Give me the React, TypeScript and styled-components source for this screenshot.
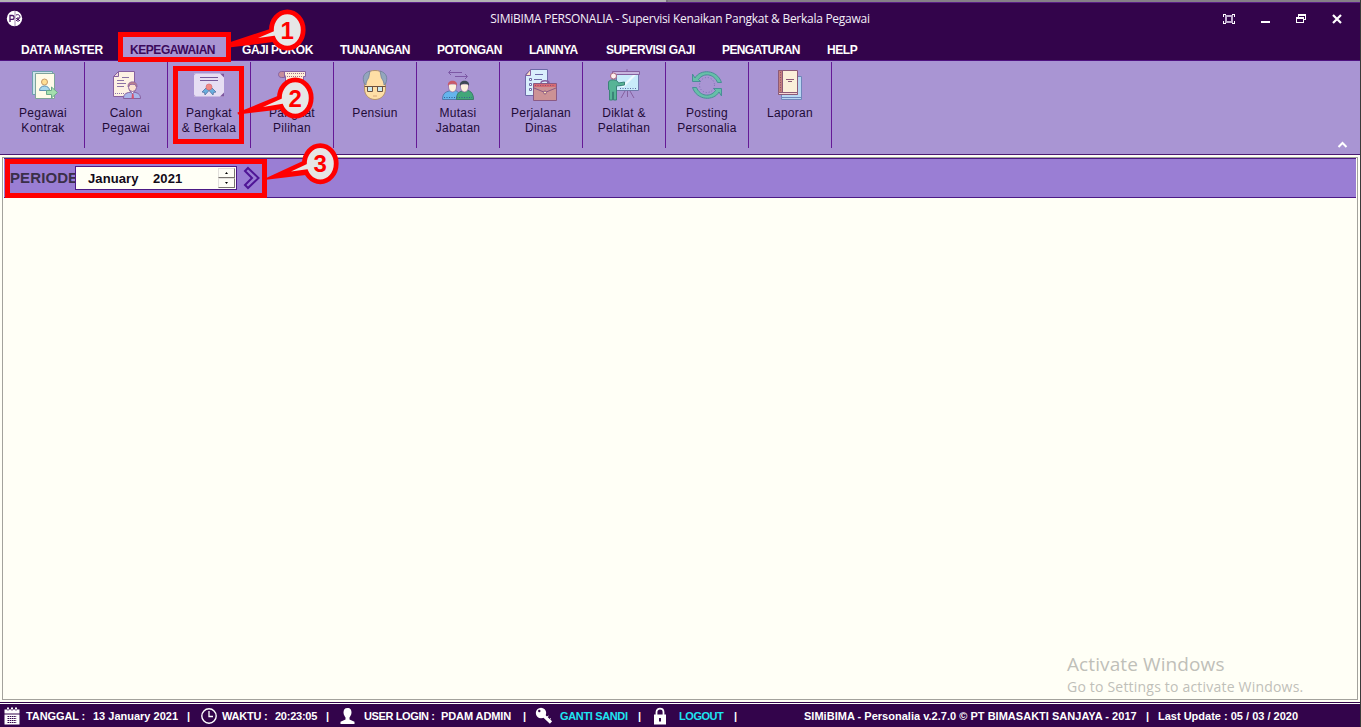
import React from "react";
import styled, { createGlobalStyle } from "styled-components";

const GlobalStyle = createGlobalStyle`
  * { box-sizing: border-box; }
  body { margin: 0; overflow: hidden; background: #33044b; }
`;

const sans = `"Liberation Sans", Arial, sans-serif`;
const ui = `"Open Sans", "Noto Sans", sans-serif`;

const Window = styled.div`
  position: relative;
  display: flex;
  flex-direction: column;
  width: 1361px;
  height: 727px;
  overflow: hidden;
  font-family: ${sans};
  background: #fffff6;
  border-right: 1px solid #3a3a3a;
`;

const DesktopEdge = styled.div`
  display: flex;
  flex: 0 0 2px;
  background: #858087;
`;
const DesktopEdgeLight = styled.div`
  width: 668px;
  background: #b3b3b3;
  border-right: 2px solid #77727a;
`;

const Header = styled.header`
  flex: 0 0 59px;
  display: flex;
  flex-direction: column;
  background: #33044b;
  border-top: 1px solid #5a1f86;
  border-bottom: 1px solid #4f1180;
`;

const TitleBar = styled.div`
  flex: 0 0 32px;
  display: grid;
  grid-template-columns: 1fr auto 1fr;
  align-items: center;
  padding: 0 6px 1px;
`;
const TitleText = styled.h1`
  margin: 0;
  font: 400 12px/16px ${ui};
  letter-spacing: -0.27px;
  color: #f4eef8;
  white-space: nowrap;
`;
const Controls = styled.div`
  display: flex;
  justify-content: flex-end;
  gap: 20px;
  padding-right: 9px;
`;

const MenuBar = styled.nav`
  display: flex;
  flex: 1;
  padding-left: 9px;
`;
const MenuItem = styled.div<{ $w: number; $active?: boolean; $ls?: number }>`
  width: ${(p) => p.$w}px;
  padding: 5px 0 0 12px;
  font-size: 12px;
  font-weight: 700;
  line-height: 20px;
  letter-spacing: ${(p) => p.$ls ?? -0.45}px;
  white-space: nowrap;
  color: ${(p) => (p.$active ? "#3c0a5c" : "#fff")};
  background: ${(p) => (p.$active ? "#a995d3" : "transparent")};
`;

const Ribbon = styled.div`
  flex: 0 0 94px;
  display: flex;
  align-items: flex-start;
  padding: 1px 12px 0 2px;
  background: #a995d3;
  border-bottom: 1px solid #4b1a72;
`;
const RibbonItem = styled.div`
  width: 83px;
  height: 86px;
  padding-top: 7px;
  display: flex;
  flex-direction: column;
  align-items: center;
  border-right: 1px solid #651a96;
`;
const RibbonLabel = styled.span`
  margin-top: 5px;
  font-size: 12px;
  line-height: 15px;
  letter-spacing: 0.27px;
  text-align: center;
  white-space: pre;
  color: #1f0b38;
`;
const Collapse = styled.div`
  margin-left: auto;
  align-self: flex-end;
  height: 19px;
`;

const Panel = styled.main`
  flex: 1;
  margin: 2px 2px 2px 2px;
  border: 1px solid #a3a29c;
  padding: 0 0 0 1px;
  background: #fffff6;
`;
const FilterBar = styled.div`
  display: flex;
  align-items: flex-start;
  width: 1352px;
  height: 40px;
  padding: 7px 0 0 6px;
  background: #9a7ed4;
  border-top: 1px solid #4c1a85;
  border-bottom: 1px solid #4c1a85;
`;
const PeriodLabel = styled.label`
  width: 65px;
  padding-right: 1px;
  overflow: hidden;
  font-size: 15px;
  font-weight: 700;
  line-height: 23px;
  letter-spacing: 0.1px;
  color: #3a2f49;
`;
const DateField = styled.div`
  display: flex;
  width: 162px;
  height: 24px;
  padding: 1px 1px 1px 12px;
  background: #fffff6;
  border: 1px solid #4c1a85;
  font-size: 13px;
  font-weight: 700;
  line-height: 22px;
  letter-spacing: 0.1px;
  color: #120a18;
`;
const Month = styled.span`
  width: 65px;
`;
const Spinner = styled.div`
  margin-left: auto;
  width: 17px;
  display: flex;
  flex-direction: column;
`;
const SpinButton = styled.div`
  display: flex;
  align-items: center;
  justify-content: center;
  flex: 1;
  background: #fdfdf6;
  border: 1px solid #e2e0dc;
  border-right-color: #77736f;
  border-bottom-color: #77736f;
`;
const GoIcon = styled.svg`
  margin: 0 0 0 6px;
`;

const StatusBar = styled.footer`
  flex: 0 0 25px;
  display: flex;
  align-items: center;
  border-top: 1px solid #33044b;
  background: #33044b;
  box-shadow: inset 0 1px 0 #fff;
  padding-top: 1px;
`;
const Cell = styled.span<{ $w: number; $ls?: number; $link?: boolean }>`
  flex: 0 0 auto;
  width: ${(p) => p.$w}px;
  font-size: 11px;
  font-weight: 700;
  line-height: 16px;
  letter-spacing: ${(p) => p.$ls ?? 0}px;
  white-space: nowrap;
  color: ${(p) => (p.$link ? "#1ee6f2" : "#fff")};
`;
const IconCell = styled.span<{ $w: number }>`
  flex: 0 0 auto;
  width: ${(p) => p.$w}px;
  height: 18px;
`;

const Watermark = styled.div`
  position: absolute;
  left: 1067px;
  top: 652px;
  font-family: ${ui};
  color: #bfc0b9;
  white-space: nowrap;
`;
const WatermarkTitle = styled.div`
  font-size: 19px;
  line-height: 24px;
  letter-spacing: 0.1px;
`;
const WatermarkText = styled.div`
  font-size: 14px;
  line-height: 22px;
  letter-spacing: 0.2px;
`;

const Highlight = styled.div<{ $x: number; $y: number; $w: number; $h: number }>`
  position: absolute;
  left: ${(p) => p.$x}px;
  top: ${(p) => p.$y}px;
  width: ${(p) => p.$w}px;
  height: ${(p) => p.$h}px;
  border: 5px solid #f00;
`;
const Annotations = styled.svg`
  position: absolute;
  left: 0;
  top: 0;
  pointer-events: none;
`;

const ln = "#86609f";

const icons: Record<string, React.ReactNode> = {
  kontrak: (
    <g strokeWidth="1">
      <path d="M5.500 2.500h20v23h-20z" fill="#cfe6ea" stroke="#6f9fb0" />
      <path d="M8.500 4.500h19v25h-19z" fill="#fffbe8" stroke="#7fa39b" />
      <circle cx="17.500" cy="13" r="3" fill="#ffdf94" stroke="#c49a6a" />
      <path d="M12.500 21.500c0-6 10-6 10 0z" fill="#a8d8ee" stroke="#5d8fb4" />
      <path d="M19.500 21.500h5v-3.500l6 5.500-6 5.500v-3.500h-5z" fill="#a5dfae" stroke="#6aa98a" />
    </g>
  ),
  calon: (
    <g strokeWidth="1">
      <path d="M8.500 2.500h16v25h-21v-20z" fill="#fdf1e4" stroke={ln} />
      <path d="M3.500 7.500h5v-5z" fill="#efd9dc" stroke={ln} />
      <path d="M7 11.500h7M7 14.500h9M7 17.500h7M12 8.500h7" stroke="#8b73a5" fill="none" />
      <path d="M5 24.500h10" stroke="#8b73a5" strokeDasharray="1 1" />
      <path d="M13.500 29.500c0-5 3-6 9-6.500 5 .5 8 2 8 6.500z" fill="#a9b5ea" stroke={ln} />
      <path d="M20 22l2.500 3 2.500-3v-3h-5z" fill="#fff" stroke={ln} />
      <path d="M22 25h1.500l.5 4.500h-2.500z" fill="#d9506c" />
      <circle cx="22.500" cy="18.500" r="4" fill="#fbe1cf" stroke={ln} />
      <path d="M18 18c-1-7 10-7 9 0l-2-2.500h-5z" fill="#b98090" stroke={ln} strokeWidth=".6" />
    </g>
  ),
  pangkat: (
    <g>
      <path d="M1 4.500h30v23H1z" fill="#e6def3" />
      <path d="M31 4.500h-4l4 4zM31 27.500h-4l4-4z" fill="#7d569f" />
      <path d="M1 4.500h2l-2 2zM1 27.500h2l-2-2z" fill="#b9a2d3" />
      <path d="M7 8.500h18M7 11.500h18" stroke="#75599a" />
      <path d="M13 19l-4 4 2.500.5.5 2.500 4-4.500zM19 19l4 4-2.500.5-.5 2.500-4-4.500z" fill="#68aede" stroke="#52719f" strokeWidth=".8" />
      <circle cx="16" cy="18" r="3" fill="#f08a84" stroke="#d76c76" strokeWidth=".7" />
    </g>
  ),
  pilihan: (
    <g strokeWidth="1">
      <path d="M6.500 2.500h23v5h-2v22h-18v-22z" fill="#fdeed9" stroke={ln} />
      <path d="M8.500 8.500h-3c-4 0-4-6 0-6h3z" fill="#c58c9b" stroke={ln} />
      <path d="M11 4.500h17M11 7.500h16" stroke="#a76d8b" strokeDasharray="1 1" />
      <path d="M12 13.500h11M12 17.500h11" stroke={ln} />
    </g>
  ),
  pensiun: (
    <g strokeWidth="1">
      <path d="M5.500 13C5 5 9 1.500 16 1.500S27 5 26.500 13v7c0 6-4.500 10.500-10.500 10.500S5.500 26 5.500 20z" fill="#ffdfa6" stroke="#b3936f" />
      <path d="M11 2C4 4 3 9 5.500 15l1.500 1c0-5 3-6 3-9zM21 2c7 2 8 7 5.500 13L25 16c0-5-3-6-3-9z" fill="#93a6bd" stroke="#6f7f9c" strokeWidth=".8" />
      <path d="M8.500 17.500h5v5h-5zM18.500 17.500h5v5h-5z" fill="#c9e8ee" stroke="#6a5142" />
      <path d="M5.500 17.500h21" stroke="#6a5142" />
      <path d="M14 27h4" stroke="#d9a878" />
    </g>
  ),
  mutasi: (
    <g strokeWidth="1">
      <path d="M20 3.500H7M9 1L6.500 3.500 9 6M13 7.500h12M23 5l2.500 2.500L23 10" stroke="#7c58a5" fill="none" />
      <path d="M.5 30.500c0-7 4-8 9-9s9 2 9 9z" fill="#65b4ec" stroke="#5878ac" />
      <path d="M14.500 30.500c0-7 3-8 8-9s9 2 9 9z" fill="#42a779" stroke="#3c7b69" />
      <path d="M2 28.500h28" stroke="#345f94" strokeDasharray="1 1.500" />
      <path d="M6.500 15h8v3c0 3-2 5-4 5s-4-2-4-5z" fill="#fdf0dd" stroke={ln} strokeWidth=".7" />
      <path d="M6 17c-1.500-7 10.500-7 9 0-1-3-7.500-3-9 0z" fill="#c95a6a" />
      <path d="M18.500 15h8v3c0 3-2 5-4 5s-4-2-4-5z" fill="#fdf0dd" stroke={ln} strokeWidth=".7" />
      <path d="M18 17c-1.500-7 10.500-7 9 0-1-3-7.500-3-9 0z" fill="#3d4754" />
    </g>
  ),
  perjalanan: (
    <g strokeWidth="1">
      <path d="M5.500.5h17v26h-22v-21z" fill="#d9effc" stroke="#6d6aa8" />
      <path d="M.5 6.500h5v-6z" fill="#ffe2c4" stroke={ln} />
      <path d="M4.500 9.500h2v2h-2zM4.500 14.500h2v2h-2zM4.500 19.500h2v2h-2z" fill="#fff" stroke="#6d6aa8" />
      <path d="M9 10.500h8M9 15.500h3M10 5.500h8" stroke="#6d6aa8" />
      <path d="M16 14c0-3 8-3 8 0" fill="none" stroke={ln} strokeWidth="1.500" />
      <path d="M8.500 14.500h23v17h-23z" fill="#cc9295" stroke="#8a5a85" />
      <path d="M9 15h22v3H9z" fill="#d56a73" />
      <path d="M10 16.500h20" stroke="#8a4f74" strokeDasharray="1 1.500" />
      <path d="M9 19l11 4.500L31 19" fill="none" stroke="#8a5a85" />
      <circle cx="20" cy="23.500" r="1.500" fill="#ffe0b0" stroke="#8a5a85" />
    </g>
  ),
  diklat: (
    <g strokeWidth="1">
      <path d="M17 22l-4 7M22 22l4 7M19.500 22v6" stroke={ln} fill="none" />
      <path d="M8.500 5.500h22v16h-22z" fill="#c9ebfa" stroke="#6f78ab" />
      <path d="M13 18L25 6h3L16 18z" fill="#effaff" />
      <path d="M12 19.500h17" stroke="#5c6aa5" strokeDasharray="1 1.500" />
      <path d="M4.500 2.500h27v3h-27zM18 1h2" fill="#c8b6de" stroke={ln} />
      <path d="M.5 13c1-3 9-3 10 1l6-1v3l-8 1v14h-3v-8h-1v8h-3V21l-1-.5z" fill="#57b496" stroke="#3b8378" />
      <circle cx="5.500" cy="7" r="3" fill="#fff0ee" stroke="#a96880" />
    </g>
  ),
  posting: (
    <g strokeWidth="1">
      <path d="M4 9C9 0 26 0 30.500 13.500h-4C23 5 13 3 7.500 10.500L9.500 12.500h-8V5z" fill="#66bfa8" stroke="#4a8f96" />
      <path d="M28 23C23 32 6 32 1.500 18.500h4C9 27 19 29 24.500 21.500l-2-2h8V27z" fill="#66bfa8" stroke="#4a8f96" />
      <circle cx="16" cy="16" r="7.500" fill="none" stroke="#7d6bb2" strokeDasharray="1 2" />
    </g>
  ),
  laporan: (
    <g strokeWidth="1">
      <path d="M7.500 7.500h20v23h-20z" fill="#b9d8f3" stroke="#6f86b9" />
      <path d="M7.500 28.500h20" stroke="#6f86b9" />
      <path d="M4.500 1.500h19v24h-19z" fill="#fbefd9" stroke="#8c5a77" />
      <path d="M4.500 1.500h4v22h-4z" fill="#c47f7d" stroke="#8c5a77" />
      <path d="M6.500 3v20" stroke="#8c4f6a" strokeDasharray="1 1.500" />
      <path d="M4.500 23.500h19v2h-19z" fill="#f5d6d3" stroke="#8c5a77" />
      <path d="M12 10.500h8M14 12.500h4" stroke="#8c5a77" />
    </g>
  ),
};

const ribbonItems = [
  ["kontrak", "Pegawai\nKontrak"],
  ["calon", "Calon\nPegawai"],
  ["pangkat", "Pangkat\n& Berkala"],
  ["pilihan", "Pangkat\nPilihan"],
  ["pensiun", "Pensiun"],
  ["mutasi", "Mutasi\nJabatan"],
  ["perjalanan", "Perjalanan\nDinas"],
  ["diklat", "Diklat &\nPelatihan"],
  ["posting", "Posting\nPersonalia"],
  ["laporan", "Laporan"],
];

const menu: { label: string; w: number; active?: boolean; ls?: number }[] = [
  { label: "DATA MASTER", w: 109, ls: -0.3 },
  { label: "KEPEGAWAIAN", w: 112, active: true },
  { label: "GAJI POKOK", w: 98 },
  { label: "TUNJANGAN", w: 97, ls: -0.6 },
  { label: "POTONGAN", w: 92, ls: -0.53 },
  { label: "LAINNYA", w: 77, ls: -0.5 },
  { label: "SUPERVISI GAJI", w: 116 },
  { label: "PENGATURAN", w: 105, ls: -0.6 },
  { label: "HELP", w: 58 },
];

const Logo = () => (
  <svg width="17" height="17" viewBox="0 0 17 17">
    <circle cx="8.500" cy="8.500" r="7.700" fill="#fff" />
    <path d="M4 12V5.500h2.200a1.700 1.700 0 0 1 0 3.800H4" fill="none" stroke="#4a1666" strokeWidth="1.300" />
    <path d="M9 1v15" stroke="#8b6a9d" strokeWidth=".8" />
    <path d="M10 5c2-1 4 0 4 2s-2 2-4 1.500M12 7v5M10 11l2-2 2 2" fill="none" stroke="#4a1666" strokeWidth="1" />
  </svg>
);

const Callout = ({ x, y, n, tail, shine }: { x: number; y: number; n: number; tail: string; shine: string }) => (
  <g>
    <polygon points={tail} fill="#f00" />
    <ellipse cx={x} cy={y} rx="15.900" ry="18.100" fill="#e6e6e6" stroke="#f00" strokeWidth="4.800" />
    <polygon points={shine} fill="#e6e6e6" />
    <text x={x} y={y + 8.500} textAnchor="middle" fontFamily={sans} fontWeight="700" fontSize="24" fill="#f00">
      {n}
    </text>
  </g>
);

export default function App() {
  return (
    <Window>
      <GlobalStyle />
      <DesktopEdge>
        <DesktopEdgeLight />
      </DesktopEdge>
      <Header>
        <TitleBar>
          <Logo />
          <TitleText>SIMiBIMA PERSONALIA - Supervisi Kenaikan Pangkat &amp; Berkala Pegawai</TitleText>
          <Controls>
            <svg width="16" height="12" viewBox="0 0 16 12" fill="none" shapeRendering="crispEdges">
              <path d="M2.500 4V1.500H5M11 1.500h2.500V4M13.500 8v2.500H11M5 10.500H2.500V8" stroke="#fff" />
              <path d="M5 3h6v6H5z" fill="#33044b" stroke="#c3b0d0" strokeWidth="1.500" />
            </svg>
            <svg width="16" height="12" viewBox="0 0 16 12">
              <path d="M4 8h9v2H4z" fill="#fff" />
            </svg>
            <svg width="16" height="12" viewBox="0 0 16 12" fill="none" stroke="#fff" shapeRendering="crispEdges">
              <path d="M5.500 4V1.500h7v5H11M5 2.500h8" />
              <path d="M3.500 4.500h7v5h-7zM3 5.500h8" />
            </svg>
            <svg width="16" height="12" viewBox="0 0 16 12">
              <path d="M4 2l8 8M12 2l-8 8" stroke="#fff" strokeWidth="2.200" />
            </svg>
          </Controls>
        </TitleBar>
        <MenuBar>
          {menu.map((m) => (
            <MenuItem key={m.label} $w={m.w} $active={m.active} $ls={m.ls}>
              {m.label}
            </MenuItem>
          ))}
        </MenuBar>
      </Header>
      <Ribbon>
        {ribbonItems.map(([id, label]) => (
          <RibbonItem key={id}>
            <svg width="32" height="32" viewBox="0 0 32 32">
              {icons[id]}
            </svg>
            <RibbonLabel>{label}</RibbonLabel>
          </RibbonItem>
        ))}
        <Collapse>
          <svg width="11" height="8" viewBox="0 0 11 8">
            <path d="M1.500 6l4-4 4 4" fill="none" stroke="#fff" strokeWidth="2" />
          </svg>
        </Collapse>
      </Ribbon>
      <Panel>
        <FilterBar>
          <PeriodLabel>PERIODE</PeriodLabel>
          <DateField>
            <Month>January</Month>
            <span>2021</span>
            <Spinner>
              <SpinButton>
                <svg width="3" height="2"><path d="M0 2l1.500-2L3 2z" /></svg>
              </SpinButton>
              <SpinButton>
                <svg width="3" height="2"><path d="M0 0l1.500 2L3 0z" /></svg>
              </SpinButton>
            </Spinner>
          </DateField>
          <GoIcon width="18" height="24" viewBox="0 0 18 24" fill="none" stroke="#4f1596" strokeWidth="2">
            <path d="M5 2l10.500 10L5 22l-3-3 7-7-7-7z" />
          </GoIcon>
        </FilterBar>
      </Panel>
      <StatusBar>
        <IconCell $w={26}>
          <svg width="22" height="18" viewBox="0 0 22 18">
            <path d="M4.500 2.500h15v4h-15zM4.500 7.500h15v10h-15z" fill="#fff" />
            <path d="M8 .5v3.500M12 .5v3.500M16 .5v3.500" stroke="#fff" strokeWidth="2" />
            <path d="M8 2v2M12 2v2M16 2v2M7.500 9.500h9M7.500 11.500h9M7.500 13.500h9M7.500 15.500h9" stroke="#33044b" strokeWidth="1" strokeDasharray="1.600 .6" />
          </svg>
        </IconCell>
        <Cell $w={67} $ls={-0.1}>TANGGAL :</Cell>
        <Cell $w={94}>13 January 2021</Cell>
        <Cell $w={13}>|</Cell>
        <IconCell $w={22}>
          <svg width="18" height="18" viewBox="0 0 18 18" fill="none" stroke="#fff">
            <circle cx="9" cy="9" r="7.200" strokeWidth="1.400" />
            <path d="M9 4v5.500h4" strokeWidth="1.300" />
          </svg>
        </IconCell>
        <Cell $w={53} $ls={-0.25}>WAKTU :</Cell>
        <Cell $w={51} $ls={-0.25}>20:23:05</Cell>
        <Cell $w={13}>|</Cell>
        <IconCell $w={25}>
          <svg width="17" height="18" viewBox="0 0 17 18">
            <path d="M8.500 1c3 0 4 2 4 4.500S11 9.500 10.500 10.500v2l5 2.200V17h-14v-2.300l5-2.200v-2C6 9.500 4.500 8 4.500 5.500S5.500 1 8.500 1z" fill="#fff" />
          </svg>
        </IconCell>
        <Cell $w={77} $ls={-0.38}>USER LOGIN :</Cell>
        <Cell $w={82} $ls={-0.1}>PDAM ADMIN</Cell>
        <Cell $w={12}>|</Cell>
        <IconCell $w={25}>
          <svg width="19" height="18" viewBox="0 0 19 18">
            <circle cx="6" cy="6" r="5.200" fill="#fff" />
            <circle cx="4.300" cy="4" r="1.200" fill="#33044b" />
            <path d="M8.500 8.500l7.500 7" stroke="#fff" strokeWidth="3.200" />
            <path d="M12 10l1.500-1M14.500 12.500l1.500-1" stroke="#fff" />
          </svg>
        </IconCell>
        <Cell $w={78} $ls={-0.35} $link>GANTI SANDI</Cell>
        <Cell $w={14}>|</Cell>
        <IconCell $w={27}>
          <svg width="16" height="18" viewBox="0 0 16 18">
            <path d="M4.500 8V5c0-4.500 7-4.500 7 0v3" fill="none" stroke="#fff" strokeWidth="1.800" />
            <path d="M2 7.500h12v10H2z" fill="#fff" />
            <path d="M8 11v3.500" stroke="#33044b" strokeWidth="2" />
          </svg>
        </IconCell>
        <Cell $w={55} $ls={-0.45} $link>LOGOUT</Cell>
        <Cell $w={70}>|</Cell>
        <Cell $w={342} $ls={0.02}>SIMiBIMA - Personalia v.2.7.0 © PT BIMASAKTI SANJAYA - 2017</Cell>
        <Cell $w={12}>|</Cell>
        <Cell $w={150}>Last Update : 05 / 03 / 2020</Cell>
      </StatusBar>

      <Watermark>
        <WatermarkTitle>Activate Windows</WatermarkTitle>
        <WatermarkText>Go to Settings to activate Windows.</WatermarkText>
      </Watermark>

      <Highlight $x={118} $y={32} $w={113} $h={30} />
      <Highlight $x={173} $y={66} $w={71} $h={78} />
      <Highlight $x={5} $y={159} $w={262} $h={39} />
      <Annotations width="1361" height="220" viewBox="0 0 1361 220">
        <Callout x={287.3} y={30} n={1} tail="229,42.500 273,28 277,41.500 229,47.500" shine="258,38 274.500,31 276,35.500" />
        <Callout x={295.3} y={98} n={2} tail="237.500,112.500 280,95 284,109 238,114.500" shine="263,107 282,98.500 284,103.500" />
        <Callout x={320.3} y={163.7} n={3} tail="264,179 304,160.500 310,174.500 264,180" shine="291,171.500 307,164 309,169" />
      </Annotations>
    </Window>
  );
}
